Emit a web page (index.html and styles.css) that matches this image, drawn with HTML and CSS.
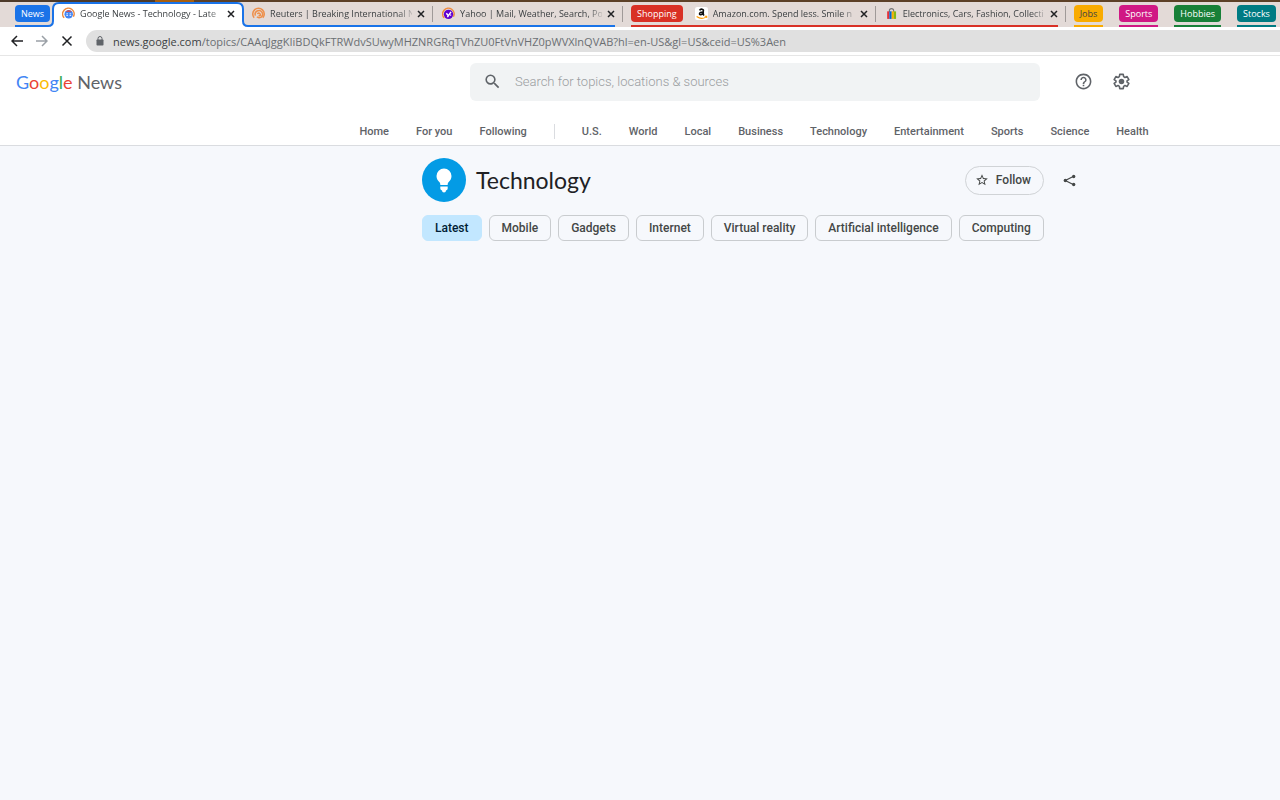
FILE: index.html
```html
<!DOCTYPE html>
<html lang="en">
<head>
  <meta charset="UTF-8">
  <meta name="viewport" content="width=device-width, initial-scale=1.0">
  <title>Google News - Technology - Latest</title>
  <link rel="stylesheet" href="styles.css">
</head>
<body>
  <div class="browser">
    <div class="tab-strip">
      <div class="tab-group blue">
        <button class="chip">News</button>
        <div class="tab active">
          <svg class="tab-shape" width="202" height="25" viewBox="0 0 202 25"><path d="M0 24h1q5 0 5-5V7q0-6 6-6h178q6 0 6 6v12q0 5 5 5h1v1H0z" fill="#fff"/><path d="M0 24h1q5 0 5-5V7q0-6 6-6h178q6 0 6 6v12q0 5 5 5h1" fill="none" stroke="#1a73e8" stroke-width="2"/></svg>
          <svg class="favicon" viewBox="0 0 12 12"><path d="M2 10A5.300 5.300 0 1 1 10.500 9" fill="none" stroke="#f08a3c" stroke-width="1.400"/><circle cx="6.200" cy="6.600" r="3.900" fill="#4285f4"/><path d="M3.200 4.300a3.900 3.900 0 0 1 6 0z" fill="#ea4335"/><path d="M4 6.300h1.500M4 7.800h1.500M7 6.300h1.500M7 7.800h1.500" stroke="#fff" stroke-width=".8"/></svg>
          <span class="tab-title">Google News - Technology - Late</span>
          <button class="close" aria-label="Close tab"><svg viewBox="0 0 8 8"><path d="M1 1l6 6M7 1L1 7"/></svg></button>
        </div>
        <div class="tab">
          <svg class="favicon" viewBox="0 0 12 12"><g fill="none" stroke="#ee8f4a" stroke-width="1.400"><path d="M2 10A5.300 5.300 0 1 1 10 10"/><path d="M3.200 8A3.400 3.400 0 1 1 8.500 9.300Q6 10.500 4.500 9"/><path d="M5 6.500q1.500-2 2.500 0T6 8"/></g></svg>
          <span class="tab-title">Reuters | Breaking International N</span>
          <button class="close" aria-label="Close tab"><svg viewBox="0 0 8 8"><path d="M1 1l6 6M7 1L1 7"/></svg></button>
        </div>
        <div class="tab">
          <svg class="favicon" viewBox="0 0 12 12"><path d="M2 10A5.300 5.300 0 1 1 10.500 9" fill="none" stroke="#f08a3c" stroke-width="1.400"/><circle cx="6" cy="6.800" r="4.300" fill="#5f01d1"/><path d="M4 5.800l1.500 1.800M8.300 4.500L5 9.300M7.500 7.500h1" stroke="#fff" stroke-width="1.300"/></svg>
          <span class="tab-title">Yahoo | Mail, Weather, Search, Po</span>
          <button class="close" aria-label="Close tab"><svg viewBox="0 0 8 8"><path d="M1 1l6 6M7 1L1 7"/></svg></button>
        </div>
      </div>
      <div class="tab-group red">
        <button class="chip">Shopping</button>
        <div class="tab">
          <svg class="favicon" viewBox="0 0 12 12"><rect width="12" height="12" rx="2" fill="#fff"/><path d="M4.200 3.200Q5 1.600 6.600 2T7.600 4V6.800L8.300 7.800M7.500 4.600Q4.200 4.500 4.200 6.300T7.500 6" fill="none" stroke="#111" stroke-width="1.500"/><path d="M1.500 8.800Q6 12 10 9.300M9 8.500h1.800v1.600" fill="none" stroke="#f90"/></svg>
          <span class="tab-title">Amazon.com. Spend less. Smile n</span>
          <button class="close" aria-label="Close tab"><svg viewBox="0 0 8 8"><path d="M1 1l6 6M7 1L1 7"/></svg></button>
        </div>
        <div class="tab">
          <svg class="favicon" viewBox="0 0 12 12"><path d="M4 4.500V3.500a2 2 0 0 1 4 0v1" fill="none" stroke="#777"/><path d="M2 4h2v7H2z" fill="#e53238"/><path d="M4 4h2.200v7H4z" fill="#0064d2"/><path d="M6.200 4h2v7h-2z" fill="#f5af02"/><path d="M8.200 4h2v7h-2z" fill="#86b817"/></svg>
          <span class="tab-title">Electronics, Cars, Fashion, Collecti</span>
          <button class="close" aria-label="Close tab"><svg viewBox="0 0 8 8"><path d="M1 1l6 6M7 1L1 7"/></svg></button>
        </div>
      </div>
      <div class="tab-group collapsed yellow"><button class="chip">Jobs</button></div>
      <div class="tab-group collapsed pink"><button class="chip">Sports</button></div>
      <div class="tab-group collapsed green"><button class="chip">Hobbies</button></div>
      <div class="tab-group collapsed teal"><button class="chip">Stocks</button></div>
    </div>
    <div class="toolbar">
      <button class="tool" aria-label="Back"><svg viewBox="0 0 12 12"><path d="M12 6H1.500M6 1L1 6l5 5"/></svg></button>
      <button class="tool disabled" aria-label="Forward"><svg viewBox="0 0 12 12"><path d="M0 6h10.500M6 1l5 5-5 5"/></svg></button>
      <button class="tool" aria-label="Stop"><svg viewBox="0 0 12 12"><path d="M1.500 1.500l9 9M10.500 1.500l-9 9"/></svg></button>
      <div class="address">
        <svg class="lock" viewBox="0 0 8 10"><path d="M2 4V2.500a2 2 0 0 1 4 0V4" fill="none" stroke="#5f6368"/><rect x=".5" y="3.500" width="7" height="6" rx=".8" fill="#5f6368"/></svg>
        <span><b>news.google.com</b>/topics/CAAqJggKIiBDQkFTRWdvSUwyMHZNRGRqTVhZU0FtVnVHZ0pWVXlnQVAB?hl=en-US&amp;gl=US&amp;ceid=US%3Aen</span>
      </div>
    </div>
  </div>

  <header>
    <div class="top-row">
      <a class="logo" href="#"><span class="google"><i class="g-blue">G</i><i class="g-red">o</i><i class="g-yellow">o</i><i class="g-blue">g</i><i class="g-green">l</i><i class="g-red">e</i></span> <span>News</span></a>
      <form class="search">
        <svg viewBox="0 0 24 24"><path d="M15.500 14h-.79l-.28-.27A6.471 6.471 0 0 0 16 9.500 6.500 6.500 0 1 0 9.500 16c1.610 0 3.090-.59 4.230-1.570l.27.28v.79l5 4.990L20.490 19l-4.990-5zm-6 0C7.010 14 5 11.990 5 9.500S7.010 5 9.500 5 14 7.010 14 9.500 11.990 14 9.500 14z"/></svg>
        <input type="text" placeholder="Search for topics, locations &amp; sources" aria-label="Search for topics, locations &amp; sources">
      </form>
      <button class="icon-btn" aria-label="Help"><svg viewBox="0 0 24 24"><path d="M11 18h2v-2h-2v2zm1-16C6.480 2 2 6.480 2 12s4.480 10 10 10 10-4.480 10-10S17.520 2 12 2zm0 18c-4.410 0-8-3.590-8-8s3.590-8 8-8 8 3.590 8 8-3.590 8-8 8zm0-14c-2.210 0-4 1.790-4 4h2c0-1.100.9-2 2-2s2 .9 2 2c0 2-3 1.750-3 5h2c0-2.250 3-2.500 3-5 0-2.210-1.790-4-4-4z"/></svg></button>
      <button class="icon-btn" aria-label="Settings"><svg viewBox="0 0 24 24"><path d="M9.800 3h4.400l.5 2.900 1.700 1 2.700-1.100 2.200 3.800-2.300 1.700v1.400l2.300 1.700-2.200 3.800-2.700-1.100-1.700 1-.5 2.900H9.800l-.5-2.900-1.700-1-2.700 1.100-2.200-3.800L5 12.700v-1.400L2.700 9.600l2.200-3.800 2.700 1.100 1.700-1z" fill="none" stroke="#5f6368" stroke-width="2" stroke-linejoin="round"/><circle cx="12" cy="12" r="3.500"/></svg></button>
    </div>
    <nav>
      <a href="#">Home</a>
      <a href="#">For you</a>
      <a href="#">Following</a>
      <span class="divider"></span>
      <a href="#">U.S.</a>
      <a href="#">World</a>
      <a href="#">Local</a>
      <a href="#">Business</a>
      <a href="#">Technology</a>
      <a href="#">Entertainment</a>
      <a href="#">Sports</a>
      <a href="#">Science</a>
      <a href="#">Health</a>
    </nav>
  </header>

  <main>
    <div class="topic">
      <svg class="topic-icon" viewBox="0 0 44 44"><circle cx="22" cy="22" r="22" fill="#039be5"/><path d="M22 10.500a7.500 7.500 0 0 0-7.500 7.500c0 3 1.500 4.800 3 6.300.7.700.8 1.400.8 2.700h7.400c0-1.300.1-2 .8-2.700 1.500-1.500 3-3.300 3-6.300a7.500 7.500 0 0 0-7.500-7.500zM18.300 28.500h7.400v2a2 2 0 0 1-1.700 2 2 2 0 0 1-4 0 2 2 0 0 1-1.700-2z" fill="#fff"/></svg>
      <h1>Technology</h1>
      <button class="follow"><svg viewBox="0 0 24 24"><path d="M22 9.240l-7.190-.62L12 2 9.190 8.630 2 9.240l5.460 4.730L5.820 21 12 17.270 18.180 21l-1.630-7.030L22 9.240zM12 15.400l-3.760 2.270 1-4.280-3.320-2.880 4.380-.38L12 6.100l1.710 4.040 4.380.38-3.320 2.880 1 4.280L12 15.400z"/></svg>Follow</button>
      <button class="share" aria-label="Share"><svg viewBox="0 0 14 14"><path d="M11.500 2.500L2.500 7l9 4.500" fill="none" stroke="#444746" stroke-width="1.300"/><circle cx="11.500" cy="2.700" r="1.800"/><circle cx="2.500" cy="7" r="1.800"/><circle cx="11.500" cy="11.300" r="1.800"/></svg></button>
    </div>
    <div class="filters">
      <button class="selected">Latest</button>
      <button>Mobile</button>
      <button>Gadgets</button>
      <button>Internet</button>
      <button>Virtual reality</button>
      <button>Artificial intelligence</button>
      <button>Computing</button>
    </div>
  </main>
</body>
</html>
```
FILE: styles.css
```css
* {
  box-sizing: border-box;
}

body {
  margin: 0;
  min-height: 100vh;
  overflow-x: hidden;
  background: #f6f8fc;
  font-family: Roboto, sans-serif;
}

button {
  border: 0;
  padding: 0;
  background: none;
  font-family: inherit;
}

a {
  text-decoration: none;
}

/* Browser bar */
.browser {
  background: #fff;
  border-bottom: 1px solid #e6e6e6;
  font-family: "Open Sans", sans-serif;
}

.tab-strip {
  display: flex;
  height: 27px;
  padding-left: 15px;
  border-top: 2px solid #5c4027;
  border-image: linear-gradient(90deg, #4d3a2a 157px, #a85f10 157px, #a85f10 195px, #5c4027 195px) 2;
  border-width: 2px 0 0;
  background: #e3dad7;
  overflow: hidden;
}

.tab-group {
  position: relative;
  display: flex;
  flex: none;
  gap: 3px;
  margin-right: 8px;
}

.tab-group::after {
  content: "";
  position: absolute;
  left: 0;
  right: 8px;
  bottom: 0;
  height: 2px;
  background: var(--group);
}

.collapsed {
  margin-right: 16px;
}

.collapsed::after {
  right: 0;
}

.blue { --group: #1a73e8; }
.red { --group: #d93025; }
.yellow { --group: #f9ab00; }
.pink { --group: #d01884; }
.green { --group: #188038; }
.teal { --group: #007b83; }

.chip {
  height: 17px;
  margin-top: 3px;
  padding: 0 6px;
  border-radius: 4px;
  background: var(--group);
  color: #fff;
  font-size: 9px;
  line-height: 17px;
}

.yellow .chip {
  color: #3c4043;
}

.tab {
  position: relative;
  display: flex;
  align-items: center;
  gap: 5px;
  width: 190px;
  height: 23px;
  padding: 0 8px 0 9px;
  margin-right: -3px;
}

.tab:last-child {
  margin-right: 0;
}

.tab:not(.active)::after {
  content: "";
  position: absolute;
  right: 0;
  top: 4px;
  width: 1px;
  height: 16px;
  background: #a09a98;
}

.active {
  z-index: 1;
}

.tab-shape {
  position: absolute;
  left: -6px;
  top: 0;
}

.favicon {
  position: relative;
  flex: none;
  width: 13px;
  height: 13px;
}

.tab-title {
  position: relative;
  flex: 1;
  overflow: hidden;
  white-space: nowrap;
  color: #3c4043;
  font-size: 9px;
  line-height: 16px;
  -webkit-mask-image: linear-gradient(90deg, #000 90%, rgba(0, 0, 0, 0.2));
  mask-image: linear-gradient(90deg, #000 90%, rgba(0, 0, 0, 0.2));
}

.close {
  position: relative;
  display: flex;
  width: 8px;
  height: 8px;
}

.close svg {
  width: 8px;
  height: 8px;
  stroke: #202124;
  stroke-width: 1.5;
}

.toolbar {
  display: flex;
  align-items: center;
  gap: 13px;
  height: 28px;
  padding-left: 11px;
}

.tool {
  display: flex;
  flex: none;
}

.tool svg {
  width: 12px;
  height: 12px;
  fill: none;
  stroke: #202124;
  stroke-width: 1.5;
}

.disabled svg {
  stroke: #9aa0a6;
}

.address {
  display: flex;
  flex: 1;
  align-items: center;
  gap: 9px;
  height: 22px;
  padding-left: 10px;
  border-radius: 11px 0 0 11px;
  background: #e0e0e0;
  color: #6b6f73;
  font-size: 11px;
  white-space: nowrap;
}

.address b {
  color: #3c4043;
  font-weight: 400;
}

.lock {
  width: 8px;
  height: 10px;
}

/* Page header */
header {
  background: #fff;
  border-bottom: 1px solid #dadce0;
}

.top-row {
  display: flex;
  align-items: center;
  height: 51px;
  padding-left: 16px;
}

.logo {
  flex: 0 0 454px;
  color: #5f6368;
  font-family: Lato, sans-serif;
  font-size: 18px;
}

.logo i {
  font-style: normal;
}

.g-blue { color: #4285f4; }
.g-red { color: #ea4335; }
.g-yellow { color: #fbbc04; }
.g-green { color: #34a853; }

.search {
  display: flex;
  flex: 0 1 570px;
  align-items: center;
  gap: 13px;
  height: 38px;
  margin-right: 24px;
  padding-left: 13px;
  border-radius: 6px;
  background: #f1f3f4;
}

.search svg,
.icon-btn svg {
  flex: none;
  width: 19px;
  height: 19px;
  fill: #5f6368;
}

.search input {
  flex: 1;
  padding: 0;
  border: 0;
  outline: 0;
  background: none;
  font: 300 13px Roboto, sans-serif;
}

.search input::placeholder {
  color: #9a9da0;
}

.icon-btn {
  display: flex;
  justify-content: center;
  width: 38px;
}

nav {
  display: flex;
  justify-content: center;
  align-items: center;
  gap: 27px;
  height: 38px;
  padding: 10px 0 0 228px;
}

nav a {
  color: #5f6368;
  font-size: 11px;
  font-weight: 500;
  white-space: nowrap;
}

.divider {
  width: 1px;
  height: 15px;
  background: #dadce0;
}

/* Topic */
main {
  display: flex;
  flex-direction: column;
  align-items: center;
  padding: 12px 0 0 230px;
}

.topic,
.filters {
  display: flex;
  width: 100%;
  max-width: 666px;
}

.topic {
  align-items: center;
}

.topic-icon {
  width: 44px;
  height: 44px;
}

h1 {
  flex: 1;
  margin: 0 0 0 10px;
  color: #202124;
  font-family: Lato, sans-serif;
  font-size: 23px;
  font-weight: 400;
}

.follow {
  display: flex;
  align-items: center;
  gap: 7px;
  height: 29px;
  padding: 0 12px 0 9px;
  border: 1px solid #d0d3d6;
  border-radius: 15px;
  color: #444746;
  font-size: 12px;
  font-weight: 500;
}

.follow svg {
  width: 14px;
  height: 14px;
  fill: #444746;
}

.share {
  display: flex;
  justify-content: center;
  width: 38px;
  margin-left: 6px;
}

.share svg {
  width: 13px;
  height: 13px;
  fill: #444746;
}

.filters {
  gap: 7px;
  margin-top: 13px;
}

.filters button {
  height: 26px;
  padding: 0 12px;
  border: 1px solid #c9cccf;
  border-radius: 6px;
  color: #444746;
  font-size: 12px;
  font-weight: 500;
  white-space: nowrap;
}

.filters .selected {
  border-color: #c2e7ff;
  background: #c2e7ff;
  color: #001d35;
}
```
